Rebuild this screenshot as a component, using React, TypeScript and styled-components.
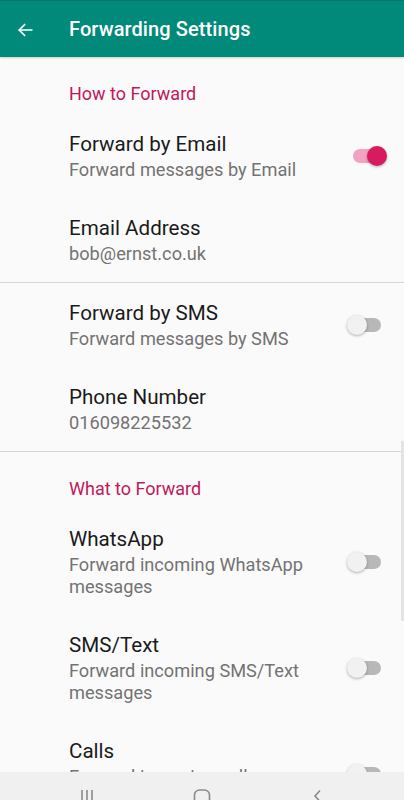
import React from "react";
import styled, { createGlobalStyle } from "styled-components";

const GlobalStyle = createGlobalStyle`
  html, body {
    margin: 0;
    padding: 0;
    background: #fafafa;
  }
  * {
    box-sizing: border-box;
  }
`;

interface Pref {
  title: string;
  summary: string;
  toggle?: boolean;
  checked?: boolean;
}

interface Section {
  title: string;
  items: Pref[];
  divider?: number[];
}

const sections: Section[] = [
  {
    title: "How to Forward",
    divider: [1, 3],
    items: [
      { title: "Forward by Email", summary: "Forward messages by Email", toggle: true, checked: true },
      { title: "Email Address", summary: "bob@ernst.co.uk" },
      { title: "Forward by SMS", summary: "Forward messages by SMS", toggle: true },
      { title: "Phone Number", summary: "016098225532" },
    ],
  },
  {
    title: "What to Forward",
    items: [
      { title: "WhatsApp", summary: "Forward incoming WhatsApp messages", toggle: true },
      { title: "SMS/Text", summary: "Forward incoming SMS/Text messages", toggle: true },
      { title: "Calls", summary: "Forward incoming call notifications", toggle: true },
    ],
  },
];

const Switch: React.FC<{ on?: boolean }> = ({ on }) => (
  <SwitchFrame>
    <Track $on={on} />
    <Thumb $on={on} />
  </SwitchFrame>
);

const App: React.FC = () => {
  return (
    <Screen>
      <GlobalStyle />
      <Toolbar>
        <BackButton>
          <svg width="20" height="20" viewBox="0 0 24 24" fill="none">
            <path
              d="M20 12H5M11.5 5.5L5 12l6.5 6.5"
              stroke="#fff"
              strokeWidth="2"
              strokeLinecap="square"
            />
          </svg>
        </BackButton>
        <ToolbarTitle>Forwarding Settings</ToolbarTitle>
      </Toolbar>
      <List>
        {sections.map((s) => (
          <React.Fragment key={s.title}>
            <Category>{s.title}</Category>
            {s.items.map((p, i) => (
              <React.Fragment key={p.title}>
                <Row>
                  <Texts>
                    <Title>{p.title}</Title>
                    <Summary>{p.summary}</Summary>
                  </Texts>
                  {p.toggle && <Switch on={p.checked} />}
                </Row>
                {s.divider?.includes(i) && <Divider />}
              </React.Fragment>
            ))}
          </React.Fragment>
        ))}
        <ScrollIndicator />
      </List>
      <NavBar>
        <NavIcon>
          <svg width="14" height="14" viewBox="0 0 14 14">
            <path d="M2 1v13M7 1v13M12 1v13" stroke="#8a8a8a" strokeWidth="1.6" />
          </svg>
        </NavIcon>
        <NavIcon>
          <svg width="18" height="18" viewBox="0 0 18 18">
            <rect x="1.5" y="1" width="15" height="16" rx="5" fill="none" stroke="#8a8a8a" strokeWidth="1.6" />
          </svg>
        </NavIcon>
        <NavIcon>
          <svg width="10" height="14" viewBox="0 0 10 14">
            <path d="M8 1.5L3 7l5 5.5" fill="none" stroke="#8a8a8a" strokeWidth="1.6" />
          </svg>
        </NavIcon>
      </NavBar>
    </Screen>
  );
};

export default App;

const Screen = styled.div`
  width: 404px;
  height: 800px;
  display: flex;
  flex-direction: column;
  overflow: hidden;
  background: #fafafa;
  font-family: Roboto, "Noto Sans", sans-serif;
`;

const Toolbar = styled.header`
  height: 57px;
  flex-shrink: 0;
  display: flex;
  align-items: center;
  background: #01897a;
  border-top: 1px solid #017266;
  box-shadow: 0 1px 2px rgba(0, 0, 0, 0.18);
  position: relative;
  z-index: 1;
`;

const BackButton = styled.div`
  width: 69px;
  display: flex;
  justify-content: center;
  padding-right: 20px;
  padding-top: 1px;
`;

const ToolbarTitle = styled.h1`
  margin: 0;
  color: #fff;
  font-size: 20px;
  font-weight: 500;
  letter-spacing: 0.1px;
`;

const List = styled.main`
  flex: 1;
  overflow: hidden;
  position: relative;
`;

const Category = styled.div`
  padding: 27px 16px 10px 69px;
  line-height: 20px;
  font-size: 18px;
  color: #c2185b;
`;

const Row = styled.div`
  display: flex;
  align-items: center;
  gap: 16px;
  padding: 17px 17px 17px 69px;
`;

const Texts = styled.div`
  flex: 1;
  min-width: 0;
`;

const Title = styled.div`
  font-size: 20.6px;
  line-height: 26px;
  color: #1a1a1a;
`;

const Summary = styled.div`
  font-size: 18.2px;
  line-height: 22px;
  color: #737373;
  margin-top: 2px;
`;

const Divider = styled.hr`
  margin: 0;
  border: 0;
  height: 1px;
  background: #d6d6d6;
`;

const SwitchFrame = styled.div`
  width: 40px;
  height: 22px;
  flex-shrink: 0;
  position: relative;
`;

const Track = styled.div<{ $on?: boolean }>`
  position: absolute;
  left: 6px;
  right: 6px;
  top: 4px;
  height: 14px;
  border-radius: 7px;
  background: ${(p) => (p.$on ? "#f2a3c2" : "#b8b8b8")};
`;

const Thumb = styled.div<{ $on?: boolean }>`
  position: absolute;
  top: 1px;
  ${(p) => (p.$on ? "right: 0;" : "left: 0;")}
  width: 20px;
  height: 20px;
  border-radius: 50%;
  background: ${(p) => (p.$on ? "#d81b60" : "#f1f1f1")};
  box-shadow: 0 1px 3px rgba(0, 0, 0, 0.3);
`;

const ScrollIndicator = styled.div`
  position: absolute;
  right: 0;
  top: 384px;
  width: 3px;
  height: 180px;
  background: #e4e4e4;
`;

const NavBar = styled.nav`
  height: 28px;
  flex-shrink: 0;
  display: grid;
  grid-template-columns: repeat(3, 115px);
  justify-content: center;
  align-items: start;
  padding-top: 17px;
  background: #f0f0f0;
  overflow: hidden;
`;

const NavIcon = styled.div`
  display: flex;
  justify-content: center;
`;
